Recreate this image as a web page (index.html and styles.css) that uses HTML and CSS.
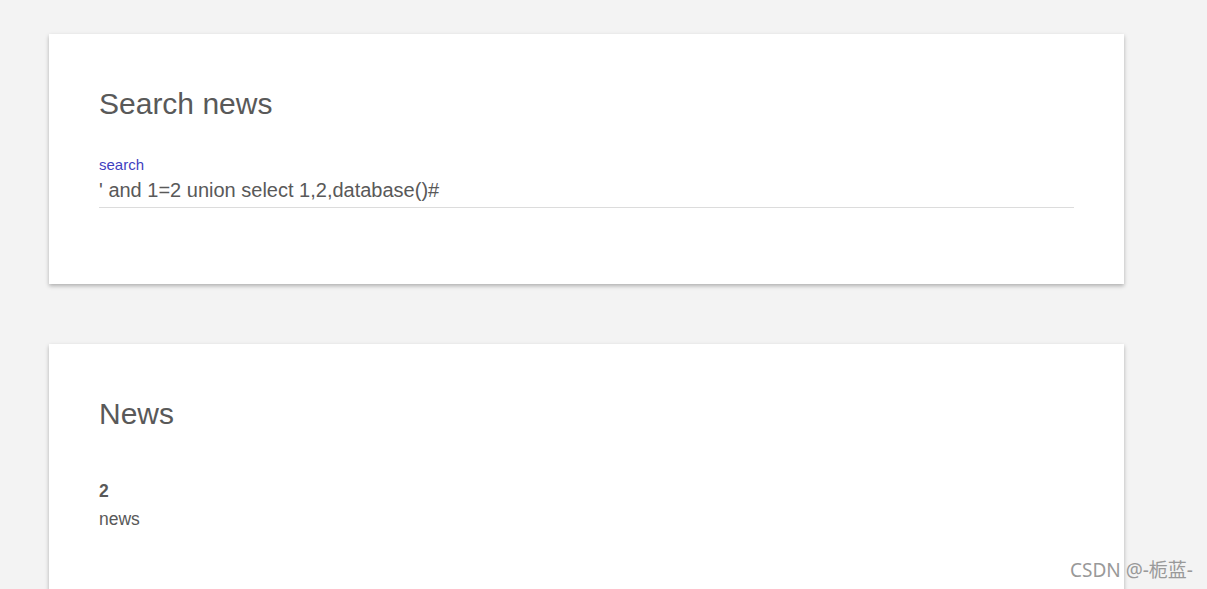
FILE: index.html
```html
<!DOCTYPE html>
<html>
<head>
<meta charset="utf-8">
<link rel="stylesheet" href="styles.css">
</head>
<body>
<div class="page">
  <section class="card">
    <h1 class="title">Search news</h1>
    <div class="field">
      <label class="label">search</label>
      <div class="input">' and 1=2 union select 1,2,database()#</div>
    </div>
  </section>
  <section class="card card-news">
    <h1 class="title">News</h1>
    <div class="item">
      <div class="item-id">2</div>
      <div class="item-text">news</div>
    </div>
  </section>
</div>
<div class="watermark">CSDN @-栀蓝-</div>
</body>
</html>
```

FILE: styles.css
```css
html, body {
  margin: 0;
  padding: 0;
  background: #f3f3f3;
  height: 100%;
  overflow: hidden;
}
body {
  font-family: "Liberation Sans", Arial, sans-serif;
  color: #595959;
}
.page {
  padding: 34px 0 0 49px;
  display: flex;
  flex-direction: column;
  gap: 60px;
}
.card {
  width: 1075px;
  box-sizing: border-box;
  background: #fff;
  padding: 50px 50px 50px;
  box-shadow: 0 2px 4px rgba(0,0,0,0.28);
}
.card-news {
  height: 300px;
}
.title {
  font-size: 30px;
  font-weight: normal;
  margin: 0;
  line-height: 40px;
  color: #595959;
}
.field {
  margin-top: 32px;
  padding-bottom: 26px;
}
.label {
  display: block;
  font-size: 15px;
  line-height: 18px;
  color: #3f3fbf;
}
.input {
  margin-top: 4px;
  font-size: 20px;
  line-height: 24px;
  padding-bottom: 5px;
  border-bottom: 1px solid #dcdcdc;
  color: #595959;
}
.item {
  margin-top: 43px;
}
.item-id {
  font-weight: bold;
  font-size: 17.5px;
  line-height: 28px;
}
.item-text {
  font-size: 17.5px;
  line-height: 29px;
}
.watermark {
  position: absolute;
  right: 14px;
  bottom: 6px;
  font-family: "Noto Sans", "Noto Sans CJK SC", sans-serif;
  font-size: 19px;
  color: #999;
}
```
